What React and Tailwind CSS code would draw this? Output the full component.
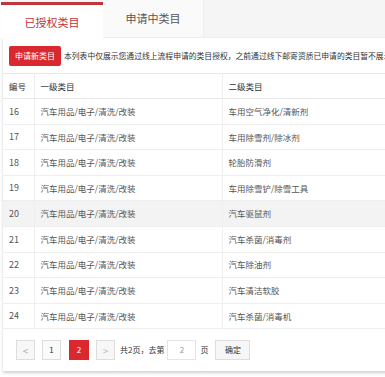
import React from "react";

const rows = [
    {id: 16, cat1: "汽车用品/电子/清洗/改装", cat2: "车用空气净化/清新剂"},
    {id: 17, cat1: "汽车用品/电子/清洗/改装", cat2: "车用除雪剂/除冰剂"},
    {id: 18, cat1: "汽车用品/电子/清洗/改装", cat2: "轮胎防滑剂"},
    {id: 19, cat1: "汽车用品/电子/清洗/改装", cat2: "车用除雪铲/除雪工具"},
    {id: 20, cat1: "汽车用品/电子/清洗/改装", cat2: "汽车驱鼠剂"},
    {id: 21, cat1: "汽车用品/电子/清洗/改装", cat2: "汽车杀菌/消毒剂"},
    {id: 22, cat1: "汽车用品/电子/清洗/改装", cat2: "汽车除油剂"},
    {id: 23, cat1: "汽车用品/电子/清洗/改装", cat2: "汽车清洁软胶"},
    {id: 24, cat1: "汽车用品/电子/清洗/改装", cat2: "汽车杀菌/消毒机"},
];

export default function App() {
    return (
        <div
            className="w-[385px] h-[377px] bg-white overflow-hidden text-[#555]"
            style={{fontFamily: '"Noto Sans CJK SC", "Noto Sans", sans-serif'}}
        >
            <div className="ml-[3px] w-[400px] bg-white shadow-[0_2px_3px_rgba(0,0,0,0.18)] pb-[11px]">
                {/* 탭 */}
                <div className="flex h-[38px] bg-[#f5f5f5] border-b border-[#eee]">
                    <div className="w-[102px] -ml-[2px] bg-white border-t-[3px] border-[#c0353b] mt-[2px] flex items-center justify-center text-[11px] text-[#c0353b] h-[37px]">
                        已授权类目
                    </div>
                    <div className="w-[101px] bg-[#fafafa] border-r border-[#eee] flex items-center justify-center text-[11px] text-[#555]">
                        申请中类目
                    </div>
                </div>

                <div className="flex items-center h-[35px] pl-[6px] whitespace-nowrap">
                    <button className="bg-[#d9292f] text-white text-[8px] w-[52px] h-[20px] rounded-[2px] shrink-0">
                        申请新类目
                    </button>
                    <span className="ml-[3px] text-[7.8px] text-[#333]">
                        本列表中仅展示您通过线上流程申请的类目授权，之前通过线下邮寄资质已申请的类目暂不展示
                    </span>
                </div>

                {/* 테이블 */}
                <table className="w-[382px] border-collapse text-[8.5px] table-fixed">
                    <colgroup>
                        <col className="w-[31px]" />
                        <col className="w-[188px]" />
                        <col />
                    </colgroup>
                    <thead>
                        <tr className="h-[25px] border-t border-b border-[#e8e8e8] text-[#333]">
                            <th className="font-normal text-left pl-[6px] border-r border-[#eee]">编号</th>
                            <th className="font-normal text-left pl-[6px] border-r border-[#eee]">一级类目</th>
                            <th className="font-normal text-left pl-[6px]">二级类目</th>
                        </tr>
                    </thead>
                    <tbody>
                        {rows.map((r) => (
                            <tr
                                key={r.id}
                                className={`h-[25.6px] border-b border-[#eee] ${r.id === 20 ? "bg-[#f3f3f3]" : "bg-white"}`}
                            >
                                <td className="pl-[6px] border-r border-[#eee] text-[9px]">{r.id}</td>
                                <td className="pl-[6px] border-r border-[#eee]">{r.cat1}</td>
                                <td className="pl-[6px]">{r.cat2}</td>
                            </tr>
                        ))}
                    </tbody>
                </table>

                {/* 페이지네이션 */}
                <div className="flex items-center mt-[11px] pl-[13px] text-[8px] text-[#333]">
                    <button className="w-[19px] h-[20px] border border-[#ddd] bg-[#f7f7f7] text-[#aaa] text-[10px] flex items-center justify-center">
                        &lt;
                    </button>
                    <button className="ml-[7px] w-[19px] h-[20px] border border-[#ddd] bg-[#fafafa] text-[#333] flex items-center justify-center">
                        1
                    </button>
                    <button className="ml-[8px] w-[20px] h-[20px] bg-[#d9292f] text-white flex items-center justify-center">
                        2
                    </button>
                    <button className="ml-[7px] w-[19px] h-[20px] border border-[#ddd] bg-[#f7f7f7] text-[#bbb] text-[10px] flex items-center justify-center">
                        &gt;
                    </button>
                    <span className="ml-[5px]">共2页，去第</span>
                    <div className="ml-[3px] w-[29px] h-[20px] border border-[#e5e5e5] bg-white text-[#999] flex items-center justify-center">
                        2
                    </div>
                    <span className="ml-[4px]">页</span>
                    <button className="ml-[7px] w-[35px] h-[20px] border border-[#ddd] bg-[#f7f7f7] text-[#333] flex items-center justify-center">
                        确定
                    </button>
                </div>
            </div>
        </div>
    );
}
